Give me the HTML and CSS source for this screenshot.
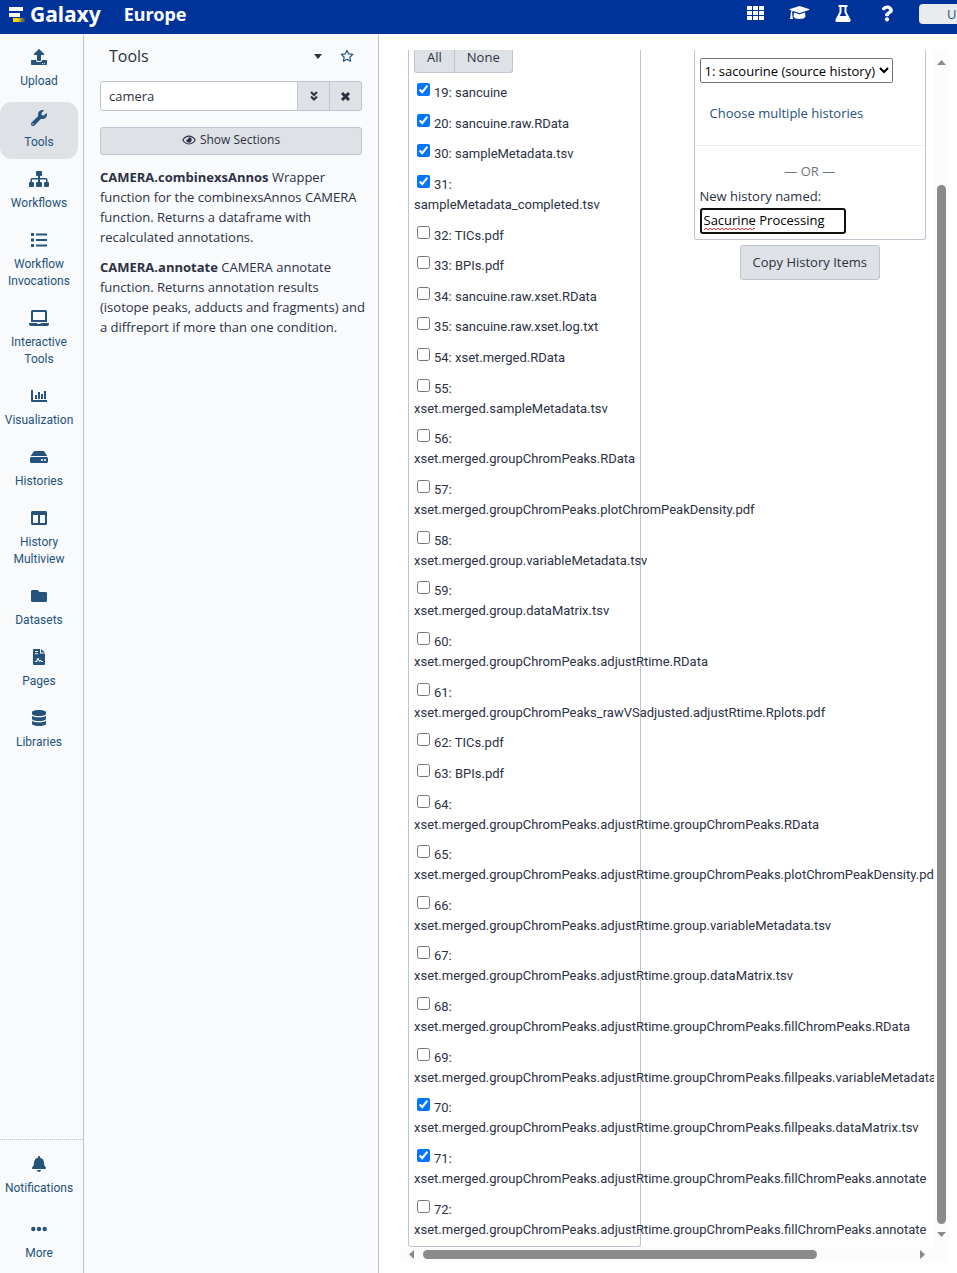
FILE: index.html
```html
<!DOCTYPE html>
<html lang="en">
<head>
<meta charset="utf-8">
<title>Galaxy Europe</title>
<link rel="stylesheet" href="styles.css">
</head>
<body>
<header class="masthead">
  <a class="brand" href="#">
    <svg class="brand-mark" viewBox="0 0 18 16" aria-hidden="true">
      <defs><linearGradient id="tail"><stop offset="0" stop-color="#ffd602"/><stop offset=".35" stop-color="#ffd602"/><stop offset="1" stop-color="#ffd602" stop-opacity="0"/></linearGradient></defs>
      <path fill="#fff" d="M0 1h14v4H0zM0 7h11v4H0z"/><path fill="url(#tail)" d="M4 12h13v4H4z"/>
    </svg>
    <span class="brand-name">Galaxy</span>
    <span class="brand-site">Europe</span>
  </a>
  <nav class="masthead-nav">
    <a href="#" aria-label="Apps"><svg width="17" height="15" viewBox="0 0 17 15"><path d="M0 0h5v4H0zm6 0h5v4H6zm6 0h5v4h-5zM0 5h5v4H0zm6 0h5v4H6zm6 0h5v4h-5zM0 10h5v4H0zm6 0h5v4H6zm6 0h5v4h-5z"/></svg></a>
    <a href="#" aria-label="Training"><svg width="21" height="14" viewBox="0 0 21 14"><path d="M10.500 0 20 3q1 .5 0 1l-8.500 2.800q-1 .3-2 0L4 5q-1 .5-1 2 .8.7.2 1.700L4 13H1l.7-4.300q-.7-1 .2-1.700 0-1.500.7-2.500L1 4Q0 3.500 1 3zM5 6.500l4.500 1.600q1 .3 2 0L16 6.500l.5 4q-1 2.500-6 2.500t-6-2.500z"/></svg></a>
    <a href="#" aria-label="Lab"><svg width="16" height="17" viewBox="0 0 16 17"><path fill-rule="evenodd" d="M3.500 0h9v2h-1v5l4 7.500Q16 17 14 17H2q-2 0-1.500-2.500l4-7.500V2h-1zM6.500 2v5.500L4.700 11h6.600L9.500 7.500V2z"/></svg></a>
    <a href="#" aria-label="Help"><svg width="12" height="17" viewBox="0 0 384 512"><path d="M202.021 0C122.202 0 70.503 32.703 29.914 91.026c-7.363 10.580-5.093 25.086 5.178 32.874l43.138 32.709c10.373 7.865 25.132 6.026 33.253-4.148 25.049-31.381 43.630-49.449 82.757-49.449 30.764 0 68.816 19.799 68.816 49.631 0 22.552-18.617 34.134-48.993 51.164-35.423 19.860-82.299 44.576-82.299 106.405V320c0 13.255 10.745 24 24 24h72.471c13.255 0 24-10.745 24-24v-5.773c0-42.860 125.268-44.645 125.268-160.627C377.504 66.256 286.902 0 202.021 0zM192 373.459c-38.196 0-69.271 31.075-69.271 69.271 0 38.195 31.075 69.270 69.271 69.270s69.271-31.075 69.271-69.271-31.075-69.270-69.271-69.270z"/></svg></a>
    <button class="user-button" type="button">User</button>
  </nav>
</header>

<div class="workspace">
  <nav class="activity-bar">
    <div class="activities">
      <a class="activity" href="#"><svg width="16" height="16" viewBox="0 0 512 512"><path d="M296 384h-80c-13.300 0-24-10.700-24-24V192h-87.700c-17.800 0-26.700-21.500-14.100-34.100L242.300 5.700c7.500-7.500 19.800-7.500 27.300 0l152.200 152.200c12.600 12.600 3.700 34.100-14.100 34.100H320v168c0 13.300-10.700 24-24 24zm216-8v112c0 13.300-10.700 24-24 24H24c-13.300 0-24-10.700-24-24V376c0-13.300 10.700-24 24-24h136v8c0 30.900 25.100 56 56 56h80c30.900 0 56-25.100 56-56v-8h136c13.300 0 24 10.700 24 24zm-124 88c0-11-9-20-20-20s-20 9-20 20 9 20 20 20 20-9 20-20zm64 0c0-11-9-20-20-20s-20 9-20 20 9 20 20 20 20-9 20-20z"/></svg><span>Upload</span></a>
      <a class="activity active" href="#"><svg width="16" height="16" viewBox="0 0 512 512"><path d="M507.730 109.100c-2.240-9.030-13.540-12.090-20.120-5.510l-74.360 74.360-67.880-11.310-11.310-67.880 74.360-74.360c6.620-6.620 3.430-17.900-5.660-20.160-47.380-11.740-99.550.91-136.580 37.930-39.640 39.640-50.550 97.100-34.050 147.200L18.740 402.760c-24.990 24.990-24.990 65.510 0 90.500 24.990 24.990 65.510 24.990 90.500 0l213.210-213.210c50.120 16.710 107.470 5.680 147.370-34.220 37.070-37.070 49.700-89.320 37.910-136.730zM64 472c-13.250 0-24-10.750-24-24 0-13.260 10.750-24 24-24s24 10.740 24 24c0 13.250-10.750 24-24 24z"/></svg><span>Tools</span></a>
      <a class="activity" href="#"><svg width="20" height="16" viewBox="0 0 20 16"><path d="M8 0h4q1 0 1 1v3q0 1-1 1h-1v2h6q1.500 0 1.500 1.500V11H19q1 0 1 1v3q0 1-1 1h-3q-1 0-1-1v-3q0-1 1-1h1V8.500h-6V11h1q1 0 1 1v3q0 1-1 1H8q-1 0-1-1v-3q0-1 1-1h1V8.500H3V11h1q1 0 1 1v3q0 1-1 1H1q-1 0-1-1v-3q0-1 1-1h.5V8.500Q1.500 7 3 7h6V5H8Q7 5 7 4V1q0-1 1-1z"/></svg><span>Workflows</span></a>
      <a class="activity" href="#"><svg width="16" height="16" viewBox="0 0 16 16"><path d="M0 1h3v3H0zm0 5.500h3v3H0zM0 12h3v3H0zM5 1.500h11v2H5zM5 7h11v2H5zm0 5.500h11v2H5z"/></svg><span>Workflow Invocations</span></a>
      <a class="activity" href="#"><svg width="20" height="16" viewBox="0 0 20 16"><path fill-rule="evenodd" d="M3.500 0h13Q18 0 18 1.500V12H2V1.500Q2 0 3.500 0zM4 2v8h12V2zM0 13h8q0 1 1 1h2q1 0 1-1h8v1q0 2-2 2H2q-2 0-2-2z"/></svg><span>Interactive Tools</span></a>
      <a class="activity" href="#"><svg width="16" height="16" viewBox="0 0 16 16"><path d="M0 2h2v10h14v2H1q-1 0-1-1zM4 7h2v4H4zm3-3h2v7H7zm3 2h2v5h-2zm3-3h2v8h-2z"/></svg><span>Visualization</span></a>
      <a class="activity" href="#"><svg width="18" height="16" viewBox="0 0 576 512"><path d="M576 304v96c0 26.510-21.490 48-48 48H48c-26.510 0-48-21.490-48-48v-96c0-26.510 21.490-48 48-48h480c26.510 0 48 21.490 48 48zm-48-80a79.557 79.557 0 0 1 30.777 6.165L462.250 85.374A48.003 48.003 0 0 0 422.311 64H153.689a48 48 0 0 0-39.938 21.374L17.223 230.165A79.557 79.557 0 0 1 48 224h480zm-48 96c-17.673 0-32 14.327-32 32s14.327 32 32 32 32-14.327 32-32-14.327-32-32-32zm-96 0c-17.673 0-32 14.327-32 32s14.327 32 32 32 32-14.327 32-32-14.327-32-32-32z"/></svg><span>Histories</span></a>
      <a class="activity" href="#"><svg width="16" height="16" viewBox="0 0 512 512"><path d="M464 32H48C21.490 32 0 53.490 0 80v352c0 26.510 21.490 48 48 48h416c26.510 0 48-21.490 48-48V80c0-26.510-21.490-48-48-48zM224 416H64V160h160v256zm224 0H288V160h160v256z"/></svg><span>History Multiview</span></a>
      <a class="activity" href="#"><svg width="16" height="16" viewBox="0 0 512 512"><path d="M464 128H272l-64-64H48C21.490 64 0 85.490 0 112v288c0 26.510 21.490 48 48 48h416c26.510 0 48-21.490 48-48V176c0-26.510-21.490-48-48-48z"/></svg><span>Datasets</span></a>
      <a class="activity" href="#"><svg width="12" height="16" viewBox="0 0 12 16"><path fill-rule="evenodd" d="M1 0h6v4.500h5V15q0 1-1 1H1q-1 0-1-1V1q0-1 1-1zM8 0l4 3.500H8zM2 2v1h3V2zm0 2.200v1h3v-1zM2 12v1h2l1-2.500L6.300 13 7.500 12l.8 1H10v-1H8.800l-1.300-1.300-1 .8L5.400 9h-1L3.200 12z"/></svg><span>Pages</span></a>
      <a class="activity" href="#"><svg width="14" height="16" viewBox="0 0 14 16"><path d="M0 2.300C0-.8 14-.8 14 2.300v1.400c0 3.100-14 3.100-14 0zM0 5.700q2 1.600 7 1.600t7-1.600V8.700c0 3.100-14 3.100-14 0zm0 5q2 1.600 7 1.600t7-1.600v3c0 3.100-14 3.100-14 0z"/></svg><span>Libraries</span></a>
    </div>
    <div class="activities activities-bottom">
      <a class="activity" href="#"><svg width="14" height="16" viewBox="0 0 448 512"><path d="M224 512c35.320 0 63.970-28.650 63.970-64H160.030c0 35.350 28.650 64 63.970 64zm215.390-149.710c-19.320-20.760-55.470-51.990-55.470-154.290 0-77.700-54.480-139.900-127.940-155.160V32c0-17.670-14.320-32-31.980-32s-31.980 14.330-31.980 32v20.840C118.560 68.100 64.080 130.300 64.080 208c0 102.300-36.150 133.530-55.470 154.290-6 6.450-8.660 14.160-8.610 21.710.11 16.400 12.980 32 32.100 32h383.800c19.120 0 32-15.600 32.100-32 .05-7.550-2.610-15.270-8.610-21.710z"/></svg><span>Notifications</span></a>
      <a class="activity" href="#"><svg width="16" height="16" viewBox="0 0 16 16"><circle cx="2.300" cy="8" r="2.200"/><circle cx="8" cy="8" r="2.200"/><circle cx="13.700" cy="8" r="2.200"/></svg><span>More</span></a>
    </div>
  </nav>

  <aside class="tool-panel">
    <div class="tool-heading">
      <h2>Tools</h2>
      <button type="button" aria-label="Panel views"><svg width="8" height="5" viewBox="0 0 8 5"><path d="M0 0h8L4 5z"/></svg></button>
      <button type="button" class="favorite" aria-label="Favorites"><svg width="14" height="14" viewBox="0 0 14 14"><path fill="none" stroke="currentColor" stroke-width="1.200" stroke-linejoin="round" d="m7 1.200 1.700 3.700 4.100.5-3 2.800.8 4L7 10.200l-3.600 2 .8-4-3-2.800 4.100-.5z"/></svg></button>
    </div>
    <div class="tool-search">
      <input type="text" value="camera" aria-label="Search tools">
      <button type="button" aria-label="Advanced search"><svg width="8" height="10" viewBox="0 0 8 10"><path class="stroke" d="m1 1 3 3 3-3M1 5.500l3 3 3-3"/></svg></button>
      <button type="button" aria-label="Clear search"><svg width="9" height="9" viewBox="0 0 9 9"><path class="stroke thick" d="m1 1 7 7m0-7L1 8"/></svg></button>
    </div>
    <button class="sections-button" type="button"><svg width="14" height="12" viewBox="0 0 576 512"><path d="M288 144a110.940 110.940 0 0 0-31.240 5 55.400 55.400 0 0 1 7.240 27 56 56 0 0 1-56 56 55.400 55.400 0 0 1-27-7.240A111.710 111.710 0 1 0 288 144zm284.520 97.400C518.290 135.590 410.930 64 288 64S57.680 135.640 3.480 241.410a32.350 32.350 0 0 0 0 29.190C57.710 376.410 165.070 448 288 448s230.320-71.640 284.520-177.410a32.350 32.350 0 0 0 0-29.190zM288 400c-98.650 0-189.090-55-237.930-144C98.910 167 189.340 112 288 112s189.090 55 237.930 144C477.100 345 386.660 400 288 400z"/></svg>Show Sections</button>
    <a class="tool" href="#"><b>CAMERA.combinexsAnnos</b> Wrapper function for the combinexsAnnos CAMERA function. Returns a dataframe with recalculated annotations.</a>
    <a class="tool" href="#"><b>CAMERA.annotate</b> CAMERA annotate function. Returns annotation results (isotope peaks, adducts and fragments) and a diffreport if more than one condition.</a>
  </aside>

  <main class="center">
    <div class="viewport">
      <section class="source">
        <div class="button-group"><button type="button">All</button><button type="button">None</button></div>
        <ul class="datasets">
          <li><label><input type="checkbox" checked>19: sancuine</label></li>
          <li><label><input type="checkbox" checked>20: sancuine.raw.RData</label></li>
          <li><label><input type="checkbox" checked>30: sampleMetadata.tsv</label></li>
          <li><label><input type="checkbox" checked>31: sampleMetadata_completed.tsv</label></li>
          <li><label><input type="checkbox">32: TICs.pdf</label></li>
          <li><label><input type="checkbox">33: BPIs.pdf</label></li>
          <li><label><input type="checkbox">34: sancuine.raw.xset.RData</label></li>
          <li><label><input type="checkbox">35: sancuine.raw.xset.log.txt</label></li>
          <li><label><input type="checkbox">54: xset.merged.RData</label></li>
          <li><label><input type="checkbox">55: xset.merged.sampleMetadata.tsv</label></li>
          <li><label><input type="checkbox">56: xset.merged.groupChromPeaks.RData</label></li>
          <li><label><input type="checkbox">57: xset.merged.groupChromPeaks.plotChromPeakDensity.pdf</label></li>
          <li><label><input type="checkbox">58: xset.merged.group.variableMetadata.tsv</label></li>
          <li><label><input type="checkbox">59: xset.merged.group.dataMatrix.tsv</label></li>
          <li><label><input type="checkbox">60: xset.merged.groupChromPeaks.adjustRtime.RData</label></li>
          <li><label><input type="checkbox">61: xset.merged.groupChromPeaks_rawVSadjusted.adjustRtime.Rplots.pdf</label></li>
          <li><label><input type="checkbox">62: TICs.pdf</label></li>
          <li><label><input type="checkbox">63: BPIs.pdf</label></li>
          <li><label><input type="checkbox">64: xset.merged.groupChromPeaks.adjustRtime.groupChromPeaks.RData</label></li>
          <li><label><input type="checkbox">65: xset.merged.groupChromPeaks.adjustRtime.groupChromPeaks.plotChromPeakDensity.pdf</label></li>
          <li><label><input type="checkbox">66: xset.merged.groupChromPeaks.adjustRtime.group.variableMetadata.tsv</label></li>
          <li><label><input type="checkbox">67: xset.merged.groupChromPeaks.adjustRtime.group.dataMatrix.tsv</label></li>
          <li><label><input type="checkbox">68: xset.merged.groupChromPeaks.adjustRtime.groupChromPeaks.fillChromPeaks.RData</label></li>
          <li><label><input type="checkbox">69: xset.merged.groupChromPeaks.adjustRtime.groupChromPeaks.fillpeaks.variableMetadata.tsv</label></li>
          <li><label><input type="checkbox" checked>70: xset.merged.groupChromPeaks.adjustRtime.groupChromPeaks.fillpeaks.dataMatrix.tsv</label></li>
          <li><label><input type="checkbox" checked>71: xset.merged.groupChromPeaks.adjustRtime.groupChromPeaks.fillChromPeaks.annotate</label></li>
          <li><label><input type="checkbox">72: xset.merged.groupChromPeaks.adjustRtime.groupChromPeaks.fillChromPeaks.annotate</label></li>
        </ul>
      </section>
      <section class="target-column">
        <div class="target">
          <div class="existing">
            <select aria-label="Destination history"><option>1: sacourine (source history)</option></select>
            <a href="#">Choose multiple histories</a>
          </div>
          <div class="new-history">
            <p class="or">— OR —</p>
            <label for="new-name">New history named:</label>
            <div class="name-field"><input id="new-name" type="text" value="Sacurine Processing"><svg class="squiggle" width="53" height="4" viewBox="0 0 53 4" aria-hidden="true"><path d="m0 3 2-2 2 2 2-2 2 2 2-2 2 2 2-2 2 2 2-2 2 2 2-2 2 2 2-2 2 2 2-2 2 2 2-2 2 2 2-2 2 2 2-2 2 2 2-2 2 2 2-2 1 1"/></svg></div>
          </div>
        </div>
        <button class="copy-button" type="button">Copy History Items</button>
      </section>
    </div>
    <div class="scroll-v" aria-hidden="true"><svg width="9" height="5" viewBox="0 0 9 5"><path d="M0 5h9L4.500 0z"/></svg><i></i><svg width="9" height="5" viewBox="0 0 9 5"><path d="M0 0h9L4.500 5z"/></svg></div>
    <div class="scroll-h" aria-hidden="true"><svg width="5" height="9" viewBox="0 0 5 9"><path d="M5 0v9L0 4.500z"/></svg><i></i><svg width="5" height="9" viewBox="0 0 5 9"><path d="M0 0v9l5-4.500z"/></svg></div>
  </main>
</div>
</body>
</html>
```
FILE: styles.css
```css
* { box-sizing: border-box; }
body {
  margin: 0;
  height: 100vh;
  display: flex;
  flex-direction: column;
  overflow: hidden;
  font: 13px/20px "Open Sans", sans-serif;
  color: #2c3143;
  background: #fff;
}
a { color: inherit; text-decoration: none; }
button, input, select { font: inherit; color: inherit; }
button { cursor: pointer; }
svg { display: block; flex: none; fill: currentColor; }

.masthead {
  flex: 0 0 34px;
  display: flex;
  justify-content: space-between;
  background: #003399;
  color: #fff;
  overflow: hidden;
}
.brand {
  display: flex;
  align-items: center;
  height: 28px;
  padding-left: 9px;
  font-family: "Noto Sans", sans-serif;
  font-weight: 700;
}
.brand-mark { width: 18px; height: 16px; }
.brand-name { margin-left: 3px; font-size: 21px; }
.brand-site { margin-left: 23px; font-size: 18px; }
.masthead-nav { display: flex; }
.masthead-nav a {
  width: 44px;
  height: 26px;
  display: flex;
  align-items: center;
  justify-content: center;
}
.user-button {
  width: 38px;
  height: 20px;
  margin: 4px 0 0 10px;
  padding: 0 0 0 28px;
  border: 0;
  border-radius: 4px 0 0 4px;
  background: #e9ecef;
  color: #25537b;
  line-height: 20px;
  text-align: left;
  overflow: hidden;
}

.workspace { flex: 1; display: flex; min-height: 0; }

.activity-bar {
  flex: 0 0 84px;
  display: flex;
  flex-direction: column;
  justify-content: space-between;
  border-right: 1px solid #bdc6d0;
  background: #f8fafc;
  color: #25537b;
  font: 12px/17px Roboto, sans-serif;
}
.activities { display: flex; flex-direction: column; gap: 4px; padding-top: 7px; }
.activity {
  display: flex;
  flex-direction: column;
  align-items: center;
  gap: 8px;
  width: 78px;
  padding: 8px 0;
  border-radius: 0 12px 12px 0;
  text-align: center;
}
.activity.active { background: #dee2e6; border-radius: 12px; }
.activities-bottom { gap: 8px; border-top: 1px dotted #bdc6d0; padding-top: 8px; padding-bottom: 3px; }

.tool-panel {
  flex: 0 0 295px;
  width: 295px;
  min-width: 0;
  padding: 12px 16px;
  border-right: 1px solid #bdc6d0;
  background: #f8fafc;
}
.tool-heading { display: flex; align-items: center; height: 20px; padding-right: 8px; }
.tool-heading h2 { flex: 1; margin: 0 0 0 9px; font-size: 16px; font-weight: 400; }
.tool-heading button { padding: 0; border: 0; background: none; }
.tool-heading .favorite { margin-left: 18px; color: #25537b; }
.tool-search { display: flex; height: 30px; margin-top: 15px; }
.tool-search input {
  flex: 1;
  width: 100%;
  min-width: 0;
  padding: 0 8px;
  border: 1px solid #bdc6d0;
  border-radius: 3px 0 0 3px;
  background: #fff;
}
.tool-search button {
  flex: 0 0 33px;
  margin-left: -1px;
  padding: 0;
  display: flex;
  align-items: center;
  justify-content: center;
  border: 1px solid #bdc6d0;
  background: #dee2e6;
}
.tool-search button:last-child { border-radius: 0 3px 3px 0; }
.stroke { fill: none; stroke: currentColor; stroke-width: 2; }
.thick { stroke-width: 3; }
.sections-button {
  display: flex;
  align-items: center;
  justify-content: center;
  gap: 4px;
  width: 100%;
  height: 28px;
  margin: 16px 0 12px;
  padding: 0 0 2px;
  border: 1px solid #bdc6d0;
  border-radius: 3px;
  background: #dee2e6;
  font-size: 12px;
}
.tool { display: block; margin: 0 -6px 10px 0; }

.center {
  flex: 1;
  min-width: 0;
  display: grid;
  grid-template: minmax(0, 1fr) 15px / minmax(0, 1fr) 15px;
  padding: 16px 8px 11px 21px;
}
.viewport {
  display: grid;
  grid-template-columns: minmax(0, 1fr) minmax(0, 1fr);
  gap: 53px;
  padding: 0 8px;
  overflow: hidden;
}
.source {
  display: flex;
  flex-direction: column;
  padding: 0 5px 6px;
  border: 1px solid #bdc6d0;
  border-top: 0;
  border-radius: 0 0 3px 3px;
}
.button-group { display: flex; }
.button-group button {
  height: 23px;
  padding: 0 12px 8px;
  border: 1px solid #bdc6d0;
  border-top: 0;
  border-radius: 0 0 0 3px;
  background: #dee2e6;
  line-height: 14px;
}
.button-group button + button { margin-left: -1px; border-radius: 0 0 3px 0; }
.datasets {
  flex: 1;
  display: flex;
  flex-direction: column;
  justify-content: space-between;
  margin: 10px 0 0;
  padding: 0;
  list-style: none;
  font-family: Roboto, sans-serif;
}
.datasets input { width: 13px; height: 13px; margin: 0 4px 0 3px; vertical-align: 1px; }

.target { border: 1px solid #bdc6d0; border-top: 0; border-radius: 0 0 3px 3px; }
.existing { padding: 8px 5px 22px; border-bottom: 1px solid #e9ecef; }
.existing select {
  display: block;
  width: 193px;
  max-width: 100%;
  height: 25px;
  border: 1px solid #767676;
  border-radius: 2px;
  background: #fff;
  color: #000;
}
.existing a { display: block; margin: 20px 10px 0; color: #25537b; }
.new-history { padding: 15px 5px 5px; }
.or { margin: 0 0 5px; text-align: center; color: #6c757d; }
.new-history label { display: block; }
.name-field { position: relative; margin-top: 2px; }
.name-field input {
  display: block;
  width: 146px;
  height: 26px;
  padding: 0 2px 2px;
  border: 2px solid #101010;
  border-radius: 3px;
  color: #000;
  background: #fff;
}
.squiggle { position: absolute; left: 4px; bottom: 3px; fill: none; stroke: #f33; }
.copy-button {
  display: block;
  height: 35px;
  margin: 5px auto 0;
  padding: 0 12px 2px;
  border: 1px solid #bdc6d0;
  border-radius: 3px;
  background: #dee2e6;
}

.scroll-v, .scroll-h { display: flex; align-items: center; background: #fcfcfc; color: #8b8b8b; }
.scroll-v { flex-direction: column; padding: 10px 0; }
.scroll-v i { flex: 1; width: 9px; margin: 120px 0 8px; border-radius: 5px; background: #8b8b8b; }
.scroll-h { grid-column: 1 / -1; padding: 0 24px 0 9px; }
.scroll-h i { flex: 1; height: 9px; margin: 0 103px 0 9px; border-radius: 5px; background: #8b8b8b; }
```
